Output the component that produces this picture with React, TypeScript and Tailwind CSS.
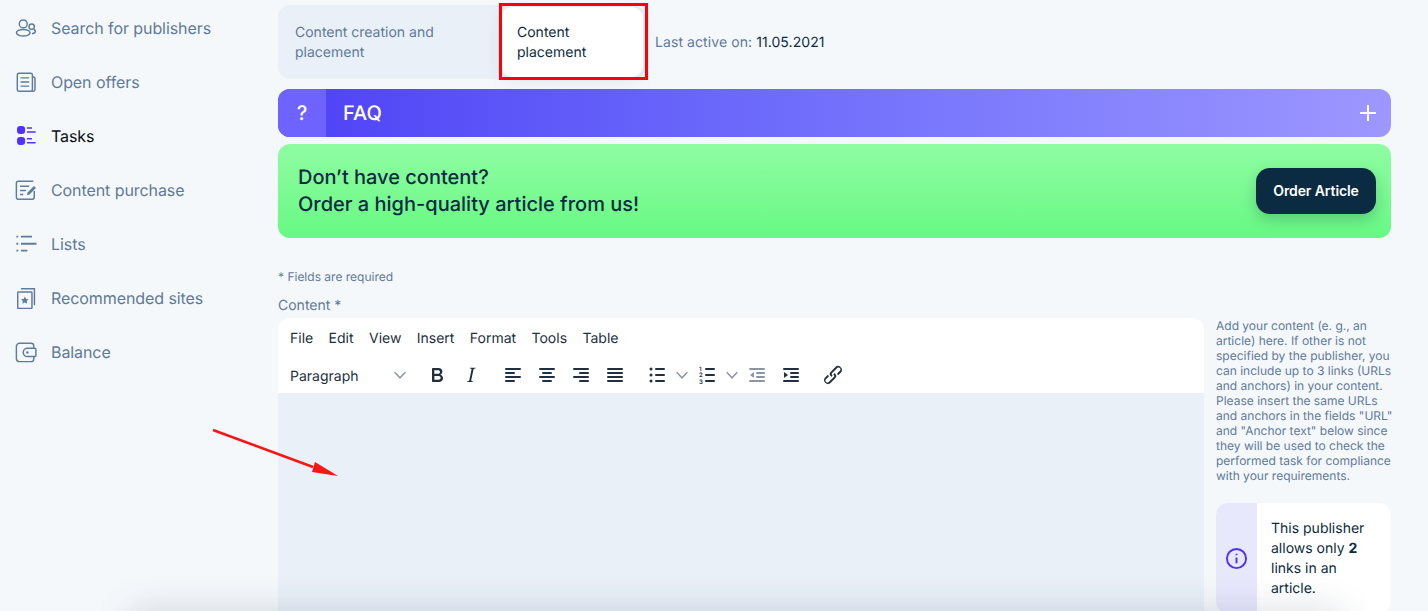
import type { ReactNode } from 'react';

const navItems: { label: string; active?: boolean; icon: ReactNode }[] = [
  {
    label: 'Search for publishers',
    icon: (
      <>
        <circle cx="9" cy="7.5" r="4.3" />
        <ellipse cx="9" cy="17.2" rx="7.4" ry="3.6" />
        <circle cx="18.2" cy="10.6" r="2.9" />
        <path d="M18.5 18.2c2.2-.2 3.7-1.2 3.7-2.6 0-.9-.6-1.6-1.5-2" />
      </>
    ),
  },
  {
    label: 'Open offers',
    icon: (
      <>
        <rect x="2.5" y="2.5" width="16.5" height="19.5" rx="1.8" />
        <path d="M19 6.5h1.2c1 0 1.6.6 1.6 1.6v12c0 1-.8 1.9-1.8 1.9h-2" />
        <path d="M6 7.5h9.5M6 12h9.5M6 16.5h9.5" />
      </>
    ),
  },
  {
    label: 'Tasks',
    active: true,
    icon: (
      <>
        <rect x="2.2" y="1.1" width="8.800" height="8.800" rx="3.600" fill="#5030fb" stroke="none" />
        <rect x="2.2" y="13" width="8.800" height="8.800" rx="3.600" fill="#5030fb" stroke="none" />
        <path d="M13 3.300h5.500M13 7.600h9.500M13 14.900h5.500M13 19.300h9.500" stroke="#5030fb" />
      </>
    ),
  },
  {
    label: 'Content purchase',
    icon: (
      <>
        <path d="M21 13v7c0 1.100-.9 2-2 2H3.500c-1.100 0-2-.9-2-2V4.500c0-1.100.9-2 2-2H20" />
        <path d="M5.500 8h10M5.500 12.500h6.500M5.500 17h3.500" />
        <path d="M13 17.500l.7-2.800 7-7 2.100 2.100-7 7z" fill="currentColor" stroke="none" />
      </>
    ),
  },
  {
    label: 'Lists',
    icon: (
      <g strokeWidth="2">
        <path d="M6.500 4h12M6.500 11.700h17M6.500 19.300h7" />
        <path d="M1.500 4h2M1.500 11.700h2M1.500 19.300h2" />
      </g>
    ),
  },
  {
    label: 'Recommended sites',
    icon: (
      <>
        <rect x="3" y="5.500" width="15.500" height="18" rx="0.800" />
        <path d="M6.500 2h14.700v18" />
        <path
          d="M10.700 10.300l1.300 2.700 2.900.4-2.100 2 .5 2.900-2.600-1.400-2.600 1.400.5-2.900-2.100-2 2.900-.4z"
          fill="currentColor"
          stroke="none"
        />
      </>
    ),
  },
  {
    label: 'Balance',
    icon: (
      <>
        <path d="M20.500 8V5.500c0-1.700-1.300-3-3-3H5c-2 0-3.500 1.500-3.500 3.500v13c0 2 1.500 3.500 3.500 3.500h12.500c1.700 0 3-1.300 3-3V17" />
        <path d="M13.500 8h8c.8 0 1.300.6 1.300 1.300v6.400c0 .7-.5 1.300-1.300 1.300h-8c-2.500 0-4.500-2-4.500-4.500s2-4.500 4.500-4.500z" />
        <circle cx="13.500" cy="12.500" r="1.300" fill="currentColor" stroke="none" />
      </>
    ),
  },
];

const line = (x: number, y: number, w: number) => <rect x={x} y={y} width={w} height="2" rx="1" />;

function ToolIcon({ children, gray }: { children: ReactNode; gray?: boolean }) {
  return (
    <span className="w-[34px] h-6 flex items-center justify-center shrink-0">
      <svg viewBox="0 0 24 24" className={`w-6 h-6 ${gray ? 'fill-[#8f959e]' : 'fill-[#222f3e]'}`}>
        {children}
      </svg>
    </span>
  );
}

function Chevron() {
  return (
    <span className="flex h-4 w-4 shrink-0 items-center justify-center">
      <svg viewBox="0 0 10 10" className="h-[14px] w-[14px] fill-none stroke-[#8f98a3] stroke-[1.1]">
        <path d="M1.200 3l3.800 4 3.800-4" />
      </svg>
    </span>
  );
}

function Toolbar() {
  return (
    <div className="flex items-center h-[36px] pl-3">
      <span className="w-[102px] text-[14px] text-[#222f3e] mt-[2px]">Paragraph</span>
      <Chevron />
      <span className="w-[12px]" />
      <ToolIcon>
        <path d="M7.800 19c-.3 0-.5 0-.6-.2l-.2-.5V5.700c0-.2 0-.4.2-.5l.6-.2h5c1.500 0 2.700.3 3.500 1 .7.6 1.100 1.400 1.100 2.500a3 3 0 0 1-.6 1.900c-.4.6-1 1-1.600 1.200.4.100.9.300 1.300.6s.8.700 1 1.200c.4.400.5 1 .5 1.600 0 1.300-.4 2.300-1.300 3-.8.700-2.100 1-3.800 1H7.800zm5-8.300c.6 0 1.200-.1 1.600-.5.4-.3.6-.7.6-1.300 0-1.100-.8-1.700-2.400-1.700H9.300v3.500h3.500zm.5 6c.7 0 1.300-.1 1.700-.4.4-.4.6-.9.6-1.500s-.2-1-.7-1.400c-.4-.3-1-.4-2-.4H9.400v3.800h4z" />
      </ToolIcon>
      <ToolIcon>
        <path d="M16.700 4.700l-.1.9h-.3c-.6 0-1 0-1.400.3-.3.3-.4.6-.5 1.100l-2.100 9.800v.6c0 .5.4.8 1.400.8h.2l-.2.800H8l.2-.8h.2c1.100 0 1.800-.5 2-1.500l2-9.800.1-.5c0-.6-.4-.8-1.400-.8h-.3l.2-.9h5.800z" />
      </ToolIcon>
      <span className="w-2" />
      <ToolIcon>
        {line(4, 5, 16)}
        {line(4, 9, 10)}
        {line(4, 13, 16)}
        {line(4, 17, 10)}
      </ToolIcon>
      <ToolIcon>
        {line(4, 5, 16)}
        {line(7, 9, 10)}
        {line(4, 13, 16)}
        {line(7, 17, 10)}
      </ToolIcon>
      <ToolIcon>
        {line(4, 5, 16)}
        {line(10, 9, 10)}
        {line(4, 13, 16)}
        {line(10, 17, 10)}
      </ToolIcon>
      <ToolIcon>
        {line(4, 5, 16)}
        {line(4, 9, 16)}
        {line(4, 13, 16)}
        {line(4, 17, 16)}
      </ToolIcon>
      <span className="w-2" />
      <ToolIcon>
        {line(10, 5, 10)}
        {line(10, 11, 10)}
        {line(10, 17, 10)}
        <circle cx="6" cy="6" r="1.500" />
        <circle cx="6" cy="12" r="1.500" />
        <circle cx="6" cy="18" r="1.500" />
      </ToolIcon>
      <Chevron />
      <ToolIcon>
        {line(10, 5, 10)}
        {line(10, 11, 10)}
        {line(10, 17, 10)}
        <text x="4" y="7.500" fontSize="6" fontFamily="Inter, sans-serif" fontWeight="600">1</text>
        <text x="4" y="14" fontSize="6" fontFamily="Inter, sans-serif" fontWeight="600">2</text>
        <text x="4" y="20.500" fontSize="6" fontFamily="Inter, sans-serif" fontWeight="600">3</text>
      </ToolIcon>
      <Chevron />
      <ToolIcon gray>
        {line(4, 5, 16)}
        {line(11, 9, 9)}
        {line(11, 13, 9)}
        {line(4, 17, 16)}
        <path d="M9 9v6l-4-3z" />
      </ToolIcon>
      <ToolIcon>
        {line(4, 5, 16)}
        {line(11, 9, 9)}
        {line(11, 13, 9)}
        {line(4, 17, 16)}
        <path d="M5 9v6l4-3z" />
      </ToolIcon>
      <span className="w-2" />
      <ToolIcon>
        <path d="M6.200 12.300a1 1 0 0 1 1.400 1.400l-2.100 2.100a2 2 0 1 0 2.700 2.700l4.800-4.800a1 1 0 0 0 0-1.400 1 1 0 1 1 1.400-1.300 2.900 2.900 0 0 1 0 4L9.600 20a3.900 3.900 0 0 1-5.500-5.500l2-2zm11.600-.6a1 1 0 0 1-1.400-1.400l2-2a2 2 0 1 0-2.600-2.800L11 10.300a1 1 0 0 0 0 1.400A1 1 0 1 1 9.600 13a2.900 2.900 0 0 1 0-4L14.400 4a3.900 3.900 0 0 1 5.500 5.500l-2 2z" />
      </ToolIcon>
    </div>
  );
}

export default function App() {
  return (
    <div className="relative flex h-[611px] w-[1428px] overflow-hidden bg-[#f5f8fb] font-['Inter',sans-serif] [text-rendering:geometricPrecision]">
      <aside className="w-[278px] shrink-0 pt-px">
        {navItems.map(item => (
          <div key={item.label} className="flex items-center h-[54px] pl-[15px] gap-[14px]">
            <svg
              viewBox="0 0 24 24"
              className="w-[22px] h-[22px] fill-none stroke-[1.600] text-[#5f7c9f] stroke-current"
            >
              {item.icon}
            </svg>
            <span className={`text-[16px] tracking-[-0.08px] ${item.active ? 'text-[#0c0f14]' : 'text-[#607a99]'}`}>
              {item.label}
            </span>
          </div>
        ))}
      </aside>

      <main className="w-[1113px] pt-[5px]">
        <div className="flex items-center">
          <div className="flex h-[74px] w-[367px] rounded-xl bg-[#e9f0f7] p-[2px]">
            <div className="w-[221px] pl-[15px] pt-4 text-[14px] leading-[20px] text-[#607a99]">
              Content creation and
              <br />
              placement
            </div>
            <div className="w-[142px] rounded-xl bg-white pl-[16px] pt-4 text-[14px] leading-[20px] text-[#0b2b42] shadow-[0_4px_16px_rgba(90,120,160,0.12)]">
              Content
              <br />
              placement
            </div>
          </div>
          <div className="ml-[10px] pt-px text-[14px] tracking-[0.08px] text-[#607a99]">
            Last active on: <span className="text-[#0b2b42]">11.05.2021</span>
          </div>
        </div>

        <div className="mt-[10px] flex h-12 items-center overflow-hidden rounded-xl bg-gradient-to-r from-[#4f3ff6] to-[#9d97ff] text-white">
          <div className="flex h-full w-12 items-center justify-center bg-[#6e63ff] text-[20px] font-medium">?</div>
          <div className="ml-[17px] flex-1 text-[20px] font-medium">FAQ</div>
          <svg viewBox="0 0 16 16" className="mr-[15px] h-4 w-4 fill-none stroke-white stroke-2">
            <path d="M8 0v16M0 8h16" />
          </svg>
        </div>

        <div className="mt-[7px] flex h-[94px] items-center justify-between rounded-xl bg-gradient-to-b from-[#8ffca2] to-[#66f983] pl-5 pr-[15px]">
          <div className="text-[20px] font-medium leading-[27px] text-[#0b2b42]">
            Don’t have content?
            <br />
            Order a high-quality article from us!
          </div>
          <button className="h-[46px] w-[120px] rounded-[14px] bg-[#0b2b42] pb-[2px] text-[14px] font-semibold tracking-[-0.1px] text-white shadow-[0_6px_14px_rgba(11,43,66,0.22)]">
            Order Article
          </button>
        </div>

        <div className="mt-[31px] text-[12px] leading-[15px] text-[#607a99]">* Fields are required</div>
        <div className="mt-[13px] text-[14px] leading-[17px] text-[#607a99]">Content *</div>

        <div className="mt-[4px] flex gap-3">
          <div className="h-[400px] w-[926px] shrink-0 overflow-hidden rounded-t-xl bg-white">
            <div className="flex h-[39px] items-center gap-[15.4px] pl-3 pt-[2px] text-[14px] text-[#222f3e]">
              <span>File</span>
              <span>Edit</span>
              <span>View</span>
              <span>Insert</span>
              <span>Format</span>
              <span>Tools</span>
              <span>Table</span>
            </div>
            <Toolbar />
            <div className="h-[300px] bg-[#e9f0f7]" />
          </div>

          <div className="w-[175px]">
            <p className="-mr-[3px] text-[12px] leading-[15px] text-[#607a99]">
              Add your content (e. g., an article) here. If other is not specified by the publisher, you can include up
              to 3 links (URLs and anchors) in your content. Please insert the same URLs and anchors in the fields "URL"
              and "Anchor text" below since they will be used to check the performed task for compliance with your
              requirements.
            </p>
            <div className="mt-[20px] flex overflow-hidden rounded-xl bg-white">
              <div className="flex w-[41px] shrink-0 items-center justify-center bg-[#e8e8fd]">
                <svg viewBox="0 0 24 24" className="h-[23px] w-[23px] fill-none stroke-[#5030fb] stroke-2">
                  <circle cx="12" cy="12" r="10" />
                  <path d="M12 11v6M12 7v1.500" />
                </svg>
              </div>
              <div className="pb-[14px] pl-[14px] pr-[10px] pt-4 text-[14px] leading-[20px] text-[#0b2b42]">
                This publisher allows only <b className="font-bold">2</b> links in an article.
              </div>
            </div>
          </div>
        </div>
      </main>

      {/* annotations and page shadow, over the content */}
      <div className="pointer-events-none absolute left-[499px] top-[3px] h-[77px] w-[149px] border-[3px] border-[#ff0000]" />
      <svg className="pointer-events-none absolute left-[205px] top-[420px] h-[70px] w-[145px]" viewBox="0 0 145 70">
        <path d="M8 10l100 37" stroke="#f81515" strokeWidth="2.500" />
        <path d="M133 56L110 42l-3 10z" fill="#f81515" />
      </svg>
      <div className="pointer-events-none absolute left-[130px] top-[611px] h-10 w-[1210px] shadow-[0_0_36px_rgba(40,60,90,0.18)]" />
    </div>
  );
}
